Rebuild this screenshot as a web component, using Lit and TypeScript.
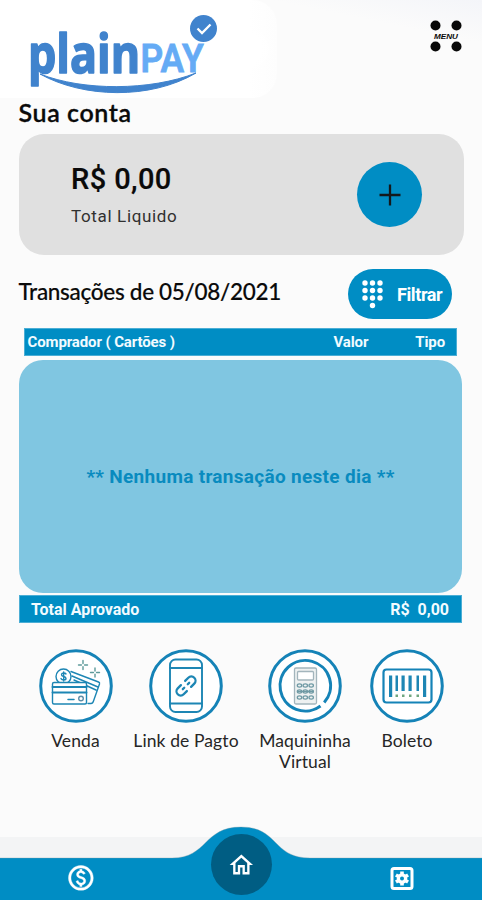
import { LitElement, html, css, svg } from "lit";
import { customElement } from "lit/decorators.js";

const star = (x: number, y: number, s: number) =>
  svg`<path d="M${x} ${y - s}v${s * 0.65}M${x} ${y + s}v${-s * 0.65}M${x - s} ${y}h${s * 0.65}M${x + s} ${y}h${-s * 0.65}" stroke="#5d9a9a"/>`;

const saleIcon = html`<svg class="ring" viewBox="0 0 74 74">
  <circle cx="37" cy="37" r="35.3" class="outer" />
  <g class="thin">
    <path d="M32 22.500l27.500 10.500c1 .4 1.300 1 1 2l-6 17c-.4 1.500-1 2.500-2.500 2.500H49M33 27l26 11M35 31l22 10" />
    <circle cx="24.500" cy="27.500" r="7.500" fill="#fff" />
    <path d="M27 25c-1-1.500-4.500-1.300-4.500.7 0 2.300 4.500 1.300 4.500 3.700 0 2-4 2-5 .2M24.700 23v9" />
    <rect x="13.500" y="33.500" width="34" height="21.500" rx="1.500" fill="#fff" />
    <path d="M13.500 38h34M13.500 43.500h34" stroke-width="1.900" />
    <path d="M29 50.500h6" stroke-width="1.500" />
    <circle cx="42" cy="49.500" r="2.300" stroke="#5d8ea8" />
    ${star(44, 16, 4.5)}${star(56, 23.5, 4.5)}
  </g>
</svg>`;

const linkIcon = html`<svg class="ring" viewBox="0 0 74 74">
  <circle cx="37" cy="37" r="35.3" class="outer" />
  <g class="thin">
    <rect x="21" y="10.500" width="32" height="52.500" rx="5.500" stroke-width="1.900" />
    <path d="M21 19h32M21 54.500h32" stroke-width="1.900" />
    <g stroke-width="2.300" transform="translate(37 37) rotate(-45)">
      <path d="M-3 4.200h-4.500a4.200 4.200 0 0 1 0-8.400h4.500M3 -4.200h4.500a4.200 4.200 0 0 1 0 8.400h-4.500M-4.500 0h2M2.500 0h2" />
    </g>
  </g>
</svg>`;

const machineIcon = html`<svg class="ring" viewBox="0 0 74 74">
  <circle cx="37" cy="37" r="35.3" class="outer" />
  <path d="M52.500 57A25.300 25.300 0 1 1 56.200 53.600" class="inner" />
  <g fill="none" stroke="#a3b5bc" stroke-width="1.300">
    <rect x="26.500" y="19" width="22" height="36" rx="1.500" fill="#eef1f1" />
    <rect x="29.500" y="22.500" width="16" height="8.500" rx="1" fill="#fff" />
    ${[36.5, 42.5, 48.5].map((y) =>
      [31.5, 37.3, 43.2].map(
        (x) => svg`<ellipse cx=${x} cy=${y} rx="2.200" ry="1.600" stroke="#6f9aa4"/>`
      )
    )}
    <path d="M29 42.500h17" stroke="#6f9aa4" />
  </g>
</svg>`;

const slipIcon = html`<svg class="ring" viewBox="0 0 74 74">
  <circle cx="37" cy="37" r="35.3" class="outer" />
  <rect x="13.500" y="20.500" width="48" height="33" rx="3" class="inner frame" />
  <g fill="#1d86b4">
    <rect x="19" y="26.500" width="3.200" height="21.500" />
    <rect x="25.500" y="26.500" width="2.500" height="15.500" />
    <rect x="31.500" y="26.500" width="3.200" height="15.500" />
    <rect x="38.500" y="26.500" width="3.200" height="15.500" />
    <rect x="46.500" y="26.500" width="2.500" height="15.500" />
    <rect x="53" y="26.500" width="3.200" height="21.500" />
  </g>
  <g fill="#6fa67f">
    <rect x="25.500" y="45.500" width="2.500" height="2.500" />
    <rect x="32" y="45.500" width="2.500" height="2.500" />
    <rect x="39" y="45.500" width="2.500" height="2.500" />
    <rect x="46.500" y="45.500" width="2.500" height="2.500" />
  </g>
</svg>`;

@customElement("app-root")
export class AppRoot extends LitElement {
  static styles = css`
    :host {
      display: flex;
      flex-direction: column;
      width: 482px;
      height: 900px;
      overflow: hidden;
      box-sizing: border-box;
      background: #fbfbfb;
      color: #0a0a0a;
      font-family: Lato, "Liberation Sans", sans-serif;
    }
    svg { display: block; }
    header {
      display: flex;
      justify-content: space-between;
      height: 98px;
      flex: none;
      background: linear-gradient(to bottom left, #f4f5f9, #fbfbfb 22%);
    }
    .brand {
      width: 277px;
      height: 98px;
      background: radial-gradient(closest-side, #fff 88%, #fff0) 0 0 / 100% 100%, linear-gradient(to right, #fff 90%, #fdfdfd);
      border-radius: 0 24px 24px 0;
    }
    .menu { margin: 20px 19px 0 0; width: 34px; height: 34px; }
    h1, h2 { margin: 0; white-space: nowrap; }
    h1 {
      margin-left: 18.5px;
      height: 36px;
      flex: none;
      font-size: 25px;
      line-height: 29px;
      font-weight: 600;
      letter-spacing: 0.6px;
      -webkit-text-stroke: 0.3px;
    }
    .balance {
      display: flex;
      align-items: center;
      justify-content: space-between;
      margin: 0 18px 0 19px;
      height: 121px;
      padding: 0 42px 0 52px;
      box-sizing: border-box;
      border-radius: 25px;
      background: #e0e0e0;
    }
    .amount {
      font: 500 29px/36px Roboto, sans-serif;
      letter-spacing: 0.4px;
      -webkit-text-stroke: 0.2px;
    }
    .caption {
      margin-top: 7px;
      font: 400 17px/24px Roboto, sans-serif;
      letter-spacing: 0.65px;
      color: #303030;
    }
    .add {
      display: grid;
      place-items: center;
      width: 65px;
      height: 65px;
      border-radius: 50%;
      background: #008dc4;
    }
    .period {
      display: flex;
      justify-content: space-between;
      margin: 14px 30px 0 18.5px;
      height: 50px;
    }
    h2 {
      font-size: 22.5px;
      line-height: 45px;
      font-weight: 500;
      letter-spacing: -0.3px;
      -webkit-text-stroke: 0.15px;
    }
    .filter {
      display: flex;
      align-items: center;
      gap: 14px;
      width: 104px;
      padding-left: 14px;
      box-sizing: border-box;
      border-radius: 25px;
      background: #008dc4;
      color: #fff;
      font: 700 18px Roboto, sans-serif;
      letter-spacing: -0.4px;
    }
    .row {
      display: flex;
      align-items: center;
      box-sizing: border-box;
      background: #008dc4;
      color: #f2fbff;
      font: 700 15px Roboto, sans-serif;
      white-space: pre;
    }
    .head { margin: 9px 25px 0 23.5px; height: 28px; padding: 0 11px 1px 3px; border: 1px solid #4baed5; letter-spacing: -0.12px; }
    .grow { flex: 1; }
    .type { margin-left: 47px; }
    .empty {
      display: grid;
      place-items: center;
      margin: 4px 20px 0 19px;
      height: 233px;
      border-radius: 24px;
      background: #80c6e1;
      color: #098bbf;
      font: 700 19px Roboto, sans-serif;
      letter-spacing: 0.3px;
    }
    .total { margin: 2px 20px 0 19px; height: 28px; padding: 0 12px 0 11px; border: 1px solid #4baed5; font-size: 16px; }
    .actions { display: flex; margin: 26px 0 0 19px; }
    .action {
      display: flex;
      flex-direction: column;
      align-items: center;
      text-align: center;
      gap: 7px;
      font-size: 17.5px;
      line-height: 21px;
      letter-spacing: 0.1px;
      color: #262626;
    }
    .action.a { width: 113px; }
    .action.b { width: 108px; }
    .action.c { width: 130px; }
    .action.d { width: 74px; }
    .ring { width: 74px; height: 74px; }
    .outer { fill: #fff; stroke: #1583b7; stroke-width: 3; }
    .inner { fill: none; stroke: #1583b7; stroke-width: 3; }
    .frame { stroke-width: 2.2; }
    .thin { fill: none; stroke: #1d86b4; stroke-width: 1.4; stroke-linecap: round; stroke-linejoin: round; }
    nav { margin-top: auto; height: 76px; flex: none; }
  `;

  render() {
    return html`
      <header>
        <div class="brand">
          <svg width="277" height="98" viewBox="0 0 277 98">
            <text transform="translate(28 72.500) scale(.845 1)" font-size="53" font-family="Open Sans, sans-serif" font-weight="700" fill="#4083cd" stroke="#4083cd" stroke-width="1.600" stroke-linejoin="round">plain</text>
            <text transform="translate(140.500 72) scale(.93 1)" font-size="38" font-family="Roboto, sans-serif" font-weight="600" fill="#65abf5" stroke="#65abf5" stroke-width=".8">PAY</text>
            <path d="M40 74C83 98 150 100 196 73C150 91 83 91 40 74Z" fill="#4083cd" stroke="#4083cd" />
            <circle cx="203.500" cy="28.500" r="13.500" fill="#4083cd" />
            <path d="M197.500 28.500l4.500 4.500 8.500-8.500" fill="none" stroke="#fff" stroke-width="2.300" />
          </svg>
        </div>
        <svg class="menu" viewBox="0 0 34 34">
          <g fill="#080808">
            <circle cx="6.500" cy="5.500" r="5" /><circle cx="27.500" cy="5.500" r="5" />
            <circle cx="6.500" cy="26.500" r="5" /><circle cx="27.500" cy="26.500" r="5" />
            <text x="5" y="18.600" font-size="7" font-style="italic" font-weight="700" font-family="Liberation Sans, sans-serif" textLength="24" lengthAdjust="spacingAndGlyphs">MENU</text>
          </g>
        </svg>
      </header>
      <h1>Sua conta</h1>
      <section class="balance">
        <div>
          <div class="amount">R$ 0,00</div>
          <div class="caption">Total Liquido</div>
        </div>
        <div class="add">
          <svg width="22" height="22" viewBox="0 0 22 22"><path d="M11 .5v21M.5 11h21" stroke="#14191c" stroke-width="2.300" /></svg>
        </div>
      </section>
      <section class="period">
        <h2>Transações de 05/08/2021</h2>
        <div class="filter">
          <svg width="21" height="29" viewBox="0 0 21 29" fill="#fff">
            ${[3, 10.5, 18].map((y) => [3, 10.5, 18].map((x) => svg`<circle cx=${x} cy=${y} r="2.700"/>`))}
            <circle cx="10.500" cy="25.500" r="2.700" />
          </svg>
          <span>Filtrar</span>
        </div>
      </section>
      <div class="row head"><span class="grow">Comprador ( Cartões )</span><span>Valor</span><span class="type">Tipo</span></div>
      <section class="empty">** Nenhuma transação neste dia **</section>
      <div class="row total"><span class="grow">Total Aprovado</span><span>R$  0,00</span></div>
      <section class="actions">
        <div class="action a">${saleIcon}<span>Venda</span></div>
        <div class="action b">${linkIcon}<span>Link de Pagto</span></div>
        <div class="action c">${machineIcon}<span>Maquininha<br />Virtual</span></div>
        <div class="action d">${slipIcon}<span>Boleto</span></div>
      </section>
      <nav>
        <svg width="482" height="76" viewBox="0 0 482 76">
          <rect y="13" width="482" height="63" fill="#f3f4f5" />
          <path d="M-2 34H172C208 34 203 3 241 3S272 34 310 34H484V78H-2Z" fill="#008dc4" stroke="#7f9aa5" stroke-opacity=".35" />
          <circle cx="241.500" cy="40.500" r="30.500" fill="#005d83" />
          <path transform="translate(227.300 27) scale(1.170)" fill="#fff" d="M12 5.690l5 4.500V18h-2v-6H9v6H7v-7.810l5-4.500M12 3L2 12h3v8h6v-6h2v6h6v-8h3L12 3z" />
          <g transform="translate(66 39) scale(1.240)" fill="#fff" stroke="#fff" stroke-width=".3">
            <path d="M12 2C6.480 2 2 6.480 2 12s4.480 10 10 10 10-4.480 10-10S17.520 2 12 2zm0 18c-4.410 0-8-3.590-8-8s3.590-8 8-8 8 3.590 8 8-3.590 8-8 8zm.89-8.900c-1.780-.59-2.640-.96-2.640-1.900 0-1.020 1.110-1.390 1.810-1.390 1.310 0 1.790.99 1.900 1.340l1.580-.67c-.15-.44-.82-1.910-2.660-2.230V5h-1.750v1.260c-2.600.56-2.620 2.850-2.620 2.960 0 2.270 2.250 2.910 3.350 3.310 1.580.56 2.280 1.070 2.280 2.030 0 1.130-1.050 1.610-1.980 1.610-1.820 0-2.340-1.870-2.400-2.090l-1.660.67c.63 2.190 2.280 2.780 3.020 2.960V19h1.750v-1.240c.52-.09 3.020-.59 3.020-3.220.01-1.390-.6-2.610-3-3.440z" />
          </g>
          <g transform="translate(402 54.500)">
            <rect x="-10" y="-10" width="20" height="20" rx="2" fill="none" stroke="#fff" stroke-width="3" />
            <g fill="#fff">
              <circle r="5.300" />
              ${[0, 60, 120, 180, 240, 300].map((a) => svg`<rect x="-1.800" y="-7" width="3.600" height="4" transform="rotate(${a})"/>`)}
            </g>
            <circle r="2" fill="#008dc4" />
          </g>
        </svg>
      </nav>
    `;
  }
}
